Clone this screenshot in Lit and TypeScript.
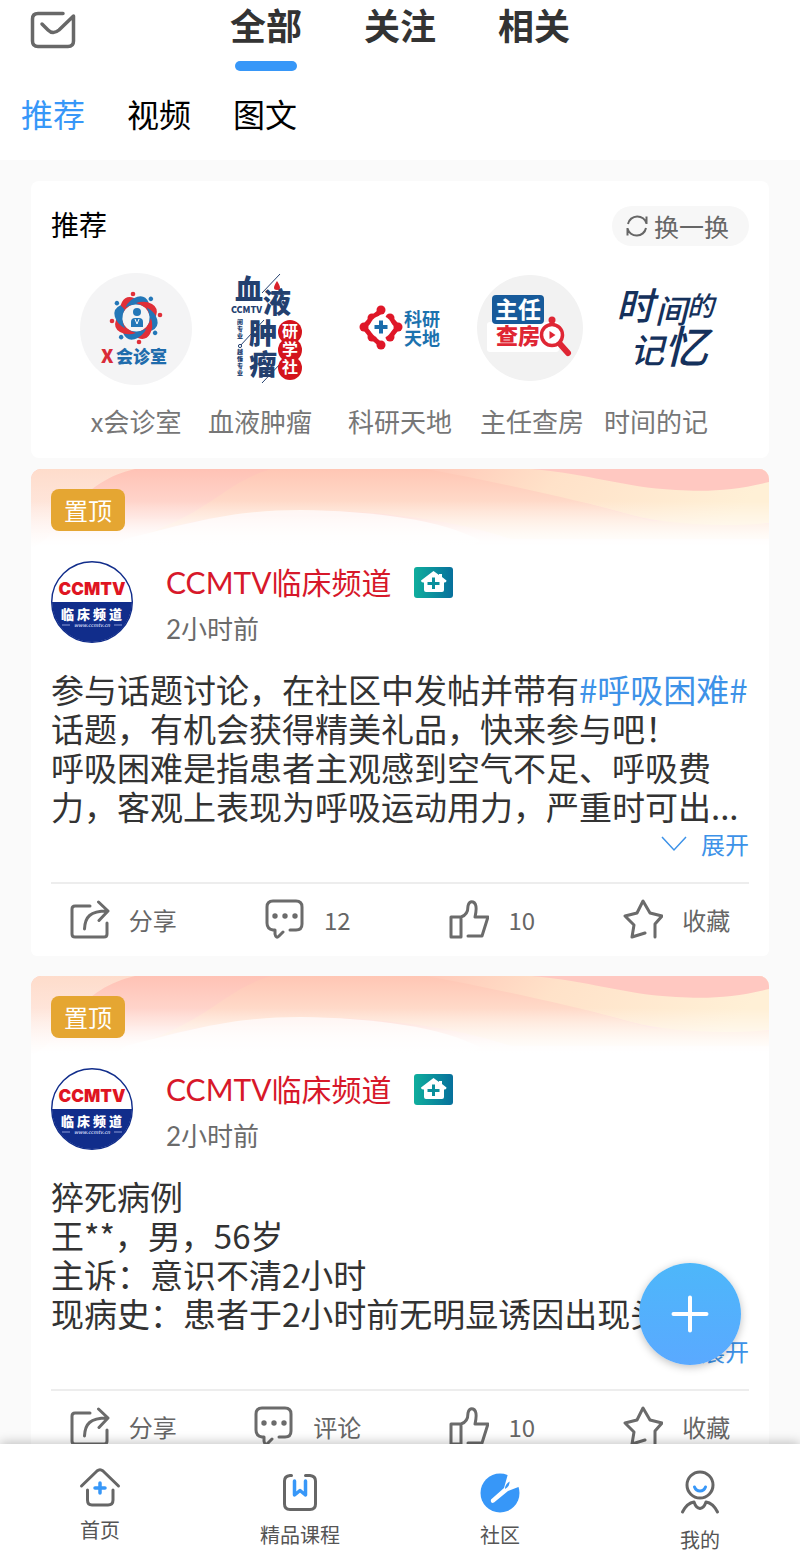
import { LitElement, html, svg, css } from "lit";
import { customElement, property, state } from "lit/decorators.js";

const logoConsult = svg`<svg viewBox="0 0 112 112" width="112" height="112" aria-hidden="true">
  <circle cx="56" cy="56" r="56" fill="#f4f4f5"/>
  ${[0, 1, 2, 3, 4, 5, 6, 7].map(
    (i) => svg`<g transform="rotate(${i * 45} 56 45)" fill="${i % 2 ? "#2377b8" : "#e02f38"}">
      <path d="M54 25Q46 22 42 29Q38 36 41 45Q44 34 54 31Z"/><circle cx="53" cy="21" r="2.300"/></g>`
  )}
  <circle cx="57" cy="39" r="4" fill="#2377b8"/>
  <path d="M51 54v-5q0-4 4-4h4q4 0 4 4v5z" fill="#2377b8"/>
  <path d="M55 46l2 5 2-5" stroke="#fff" fill="none"/>
  <text x="21" y="90" class="heavy" font-size="19" fill="#d92b38">X</text>
  <text x="36" y="90" class="heavy" font-size="17" fill="#1f6cac">会诊室</text>
</svg>`;

const logoBlood = svg`<svg viewBox="0 0 112 112" width="112" height="112" aria-hidden="true">
  <g class="heavy" fill="#23406f">
    <text x="23" y="27" font-size="28">血</text>
    <text x="51" y="40" font-size="28">液</text>
    <text x="37" y="71" font-size="28">肿</text>
    <text x="37" y="102" font-size="28">瘤</text>
    <text x="19" y="40" font-size="9">CCMTV</text>
    ${["阅", "专", "业"].map((c, i) => svg`<text x="25" y="${51 + i * 7}" font-size="6">${c}</text>`)}
    ${["越", "懂", "专", "业"].map((c, i) => svg`<text x="25" y="${81 + i * 7}" font-size="6">${c}</text>`)}
  </g>
  <path d="M50 20L68 1M28 73L52 47M50 110L70 89" stroke="#23406f" fill="none"/>
  <circle cx="28" cy="73" r="1.600" fill="#fff" stroke="#23406f"/>
  <path d="M65 8q6 9 0 9t0-9z" fill="#d9202a"/>
  <g fill="#d4141c"><circle cx="78" cy="59" r="12"/><circle cx="78" cy="77" r="12"/><circle cx="78" cy="95" r="12"/></g>
  <g class="bold" fill="#fff" font-size="16"><text x="70" y="64">研</text><text x="70" y="82">学</text><text x="70" y="100">社</text></g>
</svg>`;

const logoResearch = svg`<svg viewBox="0 0 112 112" width="112" height="112" aria-hidden="true">
  <g fill="none" stroke="#df1728" stroke-width="5" stroke-linejoin="round">
    <path d="M37 38L28 45L20 54L28 64L37 72"/><path d="M46 45L54 54L46 64"/></g>
  <g fill="#df1728"><circle cx="37" cy="37" r="4.500"/><circle cx="28" cy="45" r="4.500"/><circle cx="46" cy="45" r="4.500"/>
    <circle cx="20" cy="54" r="4.500"/><circle cx="54" cy="54" r="4.500"/><circle cx="28" cy="64" r="4.500"/><circle cx="46" cy="64" r="4.500"/><circle cx="37" cy="72" r="4.500"/></g>
  <circle cx="37" cy="54" r="11" fill="#fff"/>
  <path d="M37 47.500v13M30.500 54h13" stroke="#1a6cab" stroke-width="4" fill="none"/>
  <g class="bold" fill="#1c72ae" font-size="18"><text x="60" y="53">科研</text><text x="60" y="72">天地</text></g>
</svg>`;

const logoRounds = svg`<svg viewBox="0 0 112 112" width="112" height="112" aria-hidden="true">
  <circle cx="54" cy="55" r="53" fill="#f2f2f2"/>
  <rect x="11" y="49" width="72" height="30" rx="3" fill="#fff"/>
  <rect x="16" y="22" width="52" height="29" rx="4" fill="#175a9a"/>
  <text x="19" y="45" class="bold" font-size="23" fill="#fff">主任</text>
  <text x="20" y="71" class="heavy" font-size="22" fill="#df2634">查房</text>
  <circle cx="76" cy="62" r="10.500" fill="#fff" stroke="#df2634" stroke-width="3.500"/>
  <circle cx="76" cy="47" r="3.500" fill="#df2634"/>
  <path d="M73.500 58l6 4-6 4z" fill="#df2634"/><path d="M84 71l8 9" stroke="#df2634" stroke-width="6" stroke-linecap="round"/>
</svg>`;

const logoMemory = svg`<svg viewBox="0 0 112 112" width="112" height="112" aria-hidden="true">
  <g class="brush" fill="#15315c">
    <text x="8" y="47" font-size="38">时</text><text x="47" y="50" font-size="32">间</text><text x="79" y="43" font-size="27">的</text>
    <text x="22" y="90" font-size="34">记</text><text x="56" y="90" font-size="44">忆</text>
  </g>
</svg>`;

interface Channel { name: string; logo: unknown; start?: boolean; }
const channels: Channel[] = [
  { name: "x会诊室", logo: logoConsult },
  { name: "血液肿瘤", logo: logoBlood, start: true },
  { name: "科研天地", logo: logoResearch },
  { name: "主任查房", logo: logoRounds },
  { name: "时间的记", logo: logoMemory, start: true },
];

interface Post { lines: unknown[]; comments: string; likes: string; }
const posts: Post[] = [
  {
    lines: [
      html`参与话题讨论，在社区中发帖并带有<a class="topic" href="#topic">#呼吸困难#</a>`,
      "话题，有机会获得精美礼品，快来参与吧！",
      "呼吸困难是指患者主观感到空气不足、呼吸费",
      "力，客观上表现为呼吸运动用力，严重时可出...",
    ],
    comments: "12",
    likes: "10",
  },
  {
    lines: ["猝死病例", "王**，男，56岁", "主诉：意识不清2小时", "现病史：患者于2小时前无明显诱因出现头..."],
    comments: "评论",
    likes: "10",
  },
];

const icons = {
  share: svg`<path d="M20 7H5Q2 7 2 10V35Q2 38 5 38H34Q37 38 37 35V24M14.500 30C15 18 20 12 37 12M28.500 3L38 12L29 21.500"/>`,
  comment: svg`<path d="M25 31H31Q37 31 37 25V8Q37 2 31 2H8Q2 2 2 8V24Q2 30 8 31H10V35Q11 40 14 37L18 33"/><g fill="#6b6b6b" stroke="none"><circle cx="10" cy="17" r="2.700"/><circle cx="20" cy="17" r="2.700"/><circle cx="30" cy="17" r="2.700"/></g>`,
  like: svg`<path d="M2 18H12V38H2ZM12 18Q19 16 19 7Q20 2 24 3Q29 5 26 18H39L33 37H19"/>`,
  star: svg`<path d="M32 38V25L39 17L27 14L20 2L14 14L2 17L11 26L9 38L22 34"/>`,
};

const icon = (shape: unknown) => html`<svg class="icon" viewBox="0 0 40 40" aria-hidden="true">${shape}</svg>`;

@customElement("post-card")
class PostCard extends LitElement {
  @property({ attribute: false }) post!: Post;

  static styles = css`
    :host { display: block; background: #fff; border-radius: 10px 10px 6px 6px; overflow: hidden; position: relative; color: #333; }
    .banner { position: absolute; top: 0; left: 0; width: 100%; height: 80px; }
    .body { position: relative; padding: 20px 20px 0; }
    .pin { display: block; width: 74px; line-height: 42px; text-align: center; font-size: 24px; color: #fff; background: #e5a632; border-radius: 8px; }
    .author { display: flex; gap: 33px; margin-top: 30px; }
    .avatar { width: 82px; height: 82px; flex: none; }
    .name-row { display: flex; align-items: center; gap: 22px; height: 42px; }
    .name { font-family: Lato, "Noto Sans CJK SC", sans-serif; font-size: 30px; font-weight: 400; color: #d7182a; margin: 0; line-height: 42px; }
    .home { width: 39px; height: 31px; }
    .time { font-family: Lato, "Noto Sans CJK SC", sans-serif; font-size: 26px; line-height: 36px; margin-top: 8px; color: #6b6b6b; }
    .text { margin: 23px 0 0; font-size: 33px; line-height: 39px; }
    .line { display: block; white-space: nowrap; }
    .topic { color: #3d92e8; text-decoration: none; }
    button { font: inherit; border: 0; background: none; padding: 0; color: inherit; display: flex; align-items: center; justify-content: center; }
    .more { margin-left: auto; gap: 14px; font-size: 24px; line-height: 36px; color: #3d92e8; }
    .chevron { width: 26px; height: 16px; fill: none; stroke: #3d92e8; stroke-width: 1.500; }
    .rule { border: 0; height: 2px; background: #ededed; margin: 20px 0 0; }
    .actions { display: grid; grid-template-columns: repeat(4, 1fr); height: 72px; box-sizing: border-box; padding-bottom: 2px; font-size: 24px; color: #666; }
    .actions button { gap: 19px; }
    .icon { width: 40px; height: 40px; fill: none; stroke: #6b6b6b; stroke-width: 3; stroke-linejoin: round; stroke-linecap: round; }
  `;

  render() {
    return html`
      <svg class="banner" viewBox="0 0 738 80" preserveAspectRatio="none" aria-hidden="true">
        <defs>
          <linearGradient id="pink" x1="0" y1="0" x2="0" y2="1"><stop offset="0" stop-color="#ffc2b5"/><stop offset=".6" stop-color="#ffdcd4"/><stop offset="1" stop-color="#fff"/></linearGradient>
          <linearGradient id="peach" x1="0" y1="0" x2="0" y2="1"><stop offset="0" stop-color="#fedccb"/><stop offset="1" stop-color="#fff1ee"/></linearGradient>
          <linearGradient id="cream" x1="0" y1="0" x2="1" y2=".15"><stop offset="0" stop-color="#ffc8b8"/><stop offset=".4" stop-color="#ffe2c9"/><stop offset="1" stop-color="#fff0d6"/></linearGradient>
          <linearGradient id="mid" x1="0" y1="0" x2="0" y2="1"><stop offset="0" stop-color="#ffc6b4"/><stop offset="1" stop-color="#fff0e0"/></linearGradient>
          <linearGradient id="fade" x1="0" y1="0" x2="0" y2="1"><stop offset=".4" stop-color="#fff" stop-opacity="0"/><stop offset=".98" stop-color="#fff"/></linearGradient>
        </defs>
        <rect width="738" height="80" fill="url(#pink)"/>
        <path d="M0 0H104C70 8 50 25 15 70L0 80Z" fill="url(#peach)"/>
        <path d="M240 0H430L620 52L738 55V70H480C410 46 320 40 265 42C210 42 150 52 100 70C180 45 190 15 240 0Z" fill="url(#mid)"/>
        <path d="M95 70C170 50 210 41 270 41C340 42 410 50 450 72L430 80H80Z" fill="#fff" fill-opacity=".7"/>
        <path d="M395 0H738V54C690 58 640 56 600 46C540 29 460 12 395 0Z" fill="url(#cream)"/>
        <path d="M500 0H738V13C705 21 680 23 645 21C590 18 560 5 500 0Z" fill="#ffc8c1"/>
        <rect width="738" height="80" fill="url(#fade)"/>
      </svg>
      <div class="body">
        <span class="pin">置顶</span>
        <div class="author">
          <svg class="avatar" viewBox="0 0 82 82" role="img" aria-label="CCMTV">
            <circle cx="41" cy="41" r="40" fill="#fff"/>
            <path d="M1 41H81A40 40 0 0 1 1 41Z" fill="#112d8b"/>
            <circle cx="41" cy="41" r="40.300" fill="none" stroke="#112d8b" stroke-width="1.400"/>
            <text x="41" y="34" text-anchor="middle" font-size="17" font-weight="900" font-family="Inter, sans-serif" fill="#df1522">CCMTV</text>
            <g fill="#fff" font-size="13" font-weight="900"><text x="10" y="58">临</text><text x="26" y="58">床</text><text x="42" y="58">频</text><text x="58" y="58">道</text></g>
            <text x="41" y="66" text-anchor="middle" font-size="5" font-weight="700" font-style="italic" fill="#b9c3ea">www.ccmtv.cn</text>
            <path d="M11 64h8M63 64h8" stroke="#8c9bd6"/>
          </svg>
          <div>
            <div class="name-row">
              <h2 class="name">CCMTV临床频道</h2>
              <svg class="home" viewBox="0 0 39 31" aria-hidden="true">
                <defs><linearGradient id="teal"><stop offset="0" stop-color="#0fae9d"/><stop offset="1" stop-color="#07709c"/></linearGradient></defs>
                <rect width="39" height="31" rx="3" fill="url(#teal)"/>
                <path d="M19.500 4L7 13.500Q7 16 10 15.500V23Q10 25 12 25H28Q30 25 30 23V15.500Q32.500 16 32.500 13.500L28 10V7H25V8Z" fill="#fff"/>
                <path d="M19.500 10.500V22M13.500 16.500H25.500" stroke="#0a8f9c" stroke-width="3"/>
              </svg>
            </div>
            <div class="time">2小时前</div>
          </div>
        </div>
        <p class="text">${this.post.lines.map((l) => html`<span class="line">${l}</span>`)}</p>
        <button class="more"><svg class="chevron" viewBox="0 0 26 16" aria-hidden="true"><path d="M1 1L13 14L25 1"/></svg>展开</button>
        <hr class="rule" />
      </div>
      <div class="actions">
        <button>${icon(icons.share)}分享</button>
        <button>${icon(icons.comment)}${this.post.comments}</button>
        <button>${icon(icons.like)}${this.post.likes}</button>
        <button>${icon(icons.star)}收藏</button>
      </div>`;
  }
}

@customElement("app-root")
class AppRoot extends LitElement {
  @state() private tab = 0;
  @state() private filter = 0;

  static styles = css`
    :host { display: flex; flex-direction: column; height: 100vh; position: relative; overflow: hidden; background: #fafafa; font-family: "Noto Sans CJK SC", sans-serif; color: #333; }
    button { font: inherit; color: inherit; border: 0; background: none; padding: 0; }
    header { flex: none; background: #fff; padding-bottom: 24px; }
    .top { display: grid; grid-template-columns: 1fr auto 1fr; }
    .mail { justify-self: start; align-self: start; margin: 10px 0 0 30px; }
    .mail svg { display: block; width: 46px; height: 39px; fill: none; stroke: #686868; stroke-width: 3.500; stroke-linecap: round; stroke-linejoin: round; }
    .tabs { display: flex; gap: 62px; }
    .tab { font-size: 36px; font-weight: 700; line-height: 48px; padding-bottom: 23px; position: relative; }
    .tab.on::after { content: ""; position: absolute; left: 5px; right: 5px; bottom: 0; height: 10px; border-radius: 5px; background: #3797f8; }
    .filters { display: flex; gap: 42px; padding: 0 21px; margin-top: 20px; }
    .filter { font-size: 32px; line-height: 45px; color: #000; }
    .filter.on { color: #3797f8; }
    main { flex: 1; min-height: 0; overflow: hidden; padding: 21px 31px 0; }
    .suggest { background: #fff; border-radius: 8px; padding: 25px 20px 19px; margin-bottom: 11px; }
    .head { display: flex; justify-content: space-between; align-items: center; }
    h1 { margin: 0; font-size: 28px; font-weight: 400; line-height: 36px; padding-bottom: 4px; color: #000; }
    .swap { display: flex; align-items: center; gap: 5px; height: 40px; padding: 0 20px 0 13px; border-radius: 20px; background: #f7f7f7; font-size: 25px; color: #666; }
    .swap svg { width: 24px; height: 24px; fill: none; stroke: #666; stroke-width: 2; }
    .channels { display: grid; grid-template-columns: repeat(5, 1fr); padding: 0 19px; margin-top: 27px; }
    .channel { display: flex; flex-direction: column; align-items: center; text-decoration: none; color: #777; }
    .channel svg { display: block; overflow: visible; }
    .label { width: 120px; margin-top: 18px; font-size: 26px; line-height: 36px; text-align: center; white-space: nowrap; }
    .label.start { text-align: left; }
    .heavy { font-weight: 900; }
    .bold { font-weight: 700; }
    .brush { font-weight: 500; font-style: italic; }
    .feed { display: grid; gap: 20px; }
    nav { flex: none; display: grid; grid-template-columns: repeat(4, 1fr); height: 111px; box-sizing: border-box; padding-top: 20px; background: #fff; box-shadow: 0 -2px 10px rgba(0, 0, 0, .22); position: relative; }
    .item { display: flex; flex-direction: column; align-items: center; text-decoration: none; color: #555; font-size: 20px; line-height: 28px; }
    .item svg { display: block; fill: none; stroke: #666; stroke-width: 3; stroke-linecap: round; stroke-linejoin: round; }
    .fab { position: absolute; right: 59px; bottom: 190px; width: 102px; height: 102px; border-radius: 50%; background: linear-gradient(#4db7fa, #5aa9ff); box-shadow: 0 2px 8px rgba(0, 0, 0, .25); display: grid; place-items: center; }
    .fab svg { width: 38px; height: 38px; stroke: #fff; stroke-width: 4; stroke-linecap: round; }
  `;

  render() {
    return html`
      <header>
        <div class="top">
          <button class="mail" aria-label="消息"><svg viewBox="0 0 46 39"><path d="M33 3.500H8Q2.500 3.500 2.500 9V31Q2.500 36.500 8 36.500H38Q43.500 36.500 43.500 31V6L29 20Q23 25 18 20L12 14"/></svg></button>
          <div class="tabs">
            ${["全部", "关注", "相关"].map((t, i) => html`<button class="tab ${i === this.tab ? "on" : ""}" @click=${() => (this.tab = i)}>${t}</button>`)}
          </div>
        </div>
        <div class="filters">
          ${["推荐", "视频", "图文"].map((t, i) => html`<button class="filter ${i === this.filter ? "on" : ""}" @click=${() => (this.filter = i)}>${t}</button>`)}
        </div>
      </header>
      <main>
        <section class="suggest">
          <div class="head">
            <h1>推荐</h1>
            <button class="swap">
              <svg viewBox="0 0 24 24" aria-hidden="true"><path d="M3 10A9.500 9.500 0 0 1 21.500 9.500M21.500 2.500V10M21 14A9.500 9.500 0 0 1 2.500 14.500M2.500 21.500V14"/></svg>换一换
            </button>
          </div>
          <div class="channels">
            ${channels.map((c) => html`<a class="channel" href="#channel">${c.logo}<span class="label ${c.start ? "start" : ""}">${c.name}</span></a>`)}
          </div>
        </section>
        <div class="feed">${posts.map((p) => html`<post-card .post=${p}></post-card>`)}</div>
      </main>
      <nav>
        <a class="item" href="#home"><svg width="42" height="52" viewBox="0 0 42 52"><path d="M2.500 22L18 7Q21 4.500 24 7L39.500 22M8.500 26V36Q8.500 41 13 41H29Q34 41 34 36V26"/><path d="M21 19V29M16 24H26" stroke="#3797f8" stroke-width="3.500"/></svg>首页</a>
        <a class="item" href="#course"><svg width="42" height="57" viewBox="0 0 42 57"><path d="M12.500 11.500H11Q5.500 12 5.500 17V40Q5.500 45.500 11 45.500H31Q36.500 45.500 36.500 40V17Q36.500 12 31 11.500H26.500"/><path d="M15.500 17V31L21 26.500L26.500 31V17" stroke="#3797f8" stroke-width="3.500"/></svg>精品课程</a>
        <a class="item" href="#community"><svg width="42" height="57" viewBox="0 0 42 57"><circle cx="21" cy="29" r="19.500" fill="#3797f8" stroke="none"/><path d="M29.500 8L25 24L12 35.500Q11 40 15 38.500L29 27L42 22L42 8Z" fill="#fff" stroke="none"/><path d="M26 25Q26 20 30.500 17.500Q31 22 26 25Z" fill="#3797f8" stroke="none"/></svg>社区</a>
        <a class="item" href="#me"><svg width="42" height="62" viewBox="0 0 42 62"><circle cx="21" cy="21" r="13"/><path d="M15.500 23Q17 27 21 27Q25 27 26.500 23" stroke="#3797f8"/><path d="M3.500 48Q8 39 15 38Q17 44 21 44.500Q25 44 27 38Q34 39 38.500 48"/></svg>我的</a>
      </nav>
      <button class="fab" aria-label="发布"><svg viewBox="0 0 38 38" aria-hidden="true"><path d="M19 2.500V35.500M2.500 19H35.500"/></svg></button>`;
  }
}
